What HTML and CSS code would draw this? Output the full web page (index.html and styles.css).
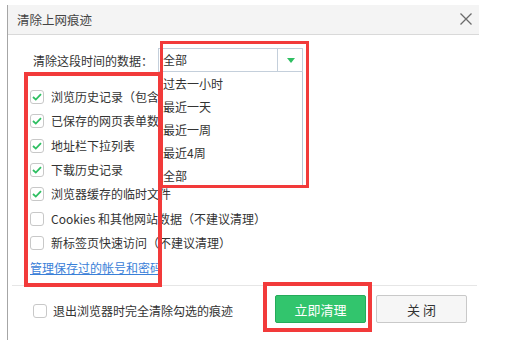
FILE: index.html
```html
<!DOCTYPE html>
<html lang="zh-CN">
<head>
<meta charset="utf-8">
<title>清除上网痕迹</title>
<link rel="stylesheet" href="styles.css">
</head>
<body>
<div class="screen">
  <div class="dialog">
    <div class="header">
      <span class="title">清除上网痕迹</span>
      <span class="close" aria-label="关闭">
        <svg width="12" height="12" viewBox="0 0 12 12"><path d="M0.5 0.5 L11.5 11.5 M11.5 0.5 L0.5 11.5" stroke="#6b6b6b" stroke-width="1.3" fill="none"/></svg>
      </span>
    </div>
    <div class="body">
      <div class="range-row">
        <span class="range-label">清除这段时间的数据：</span>
        <div class="select">
          <span class="select-value">全部</span>
          <span class="select-arrow"><svg width="8" height="5" viewBox="0 0 8 5"><path d="M0 0 H8 L4 5 Z" fill="#2fbf62"/></svg></span>
          <ul class="select-menu">
            <li>过去一小时</li>
            <li>最近一天</li>
            <li>最近一周</li>
            <li>最近4周</li>
            <li>全部</li>
          </ul>
        </div>
      </div>
      <ul class="options">
        <li class="option"><span class="checkbox checked"><svg width="10" height="8" viewBox="0 0 10 8"><path d="M1 4 L3.8 6.6 L9 1.2" stroke="#2fbf62" stroke-width="1.8" fill="none"/></svg></span><span>浏览历史记录（包含地址栏记录）</span></li>
        <li class="option"><span class="checkbox checked"><svg width="10" height="8" viewBox="0 0 10 8"><path d="M1 4 L3.8 6.6 L9 1.2" stroke="#2fbf62" stroke-width="1.8" fill="none"/></svg></span><span>已保存的网页表单数据</span></li>
        <li class="option"><span class="checkbox checked"><svg width="10" height="8" viewBox="0 0 10 8"><path d="M1 4 L3.8 6.6 L9 1.2" stroke="#2fbf62" stroke-width="1.8" fill="none"/></svg></span><span>地址栏下拉列表</span></li>
        <li class="option"><span class="checkbox checked"><svg width="10" height="8" viewBox="0 0 10 8"><path d="M1 4 L3.8 6.6 L9 1.2" stroke="#2fbf62" stroke-width="1.8" fill="none"/></svg></span><span>下载历史记录</span></li>
        <li class="option"><span class="checkbox checked"><svg width="10" height="8" viewBox="0 0 10 8"><path d="M1 4 L3.8 6.6 L9 1.2" stroke="#2fbf62" stroke-width="1.8" fill="none"/></svg></span><span>浏览器缓存的临时文件</span></li>
        <li class="option"><span class="checkbox"></span><span>Cookies 和其他网站数据（不建议清理）</span></li>
        <li class="option"><span class="checkbox"></span><span>新标签页快速访问（不建议清理）</span></li>
      </ul>
      <a class="manage-link" href="#">管理保存过的帐号和密码</a>
    </div>
    <div class="separator"></div>
    <div class="footer">
      <label class="exit-option"><span class="checkbox"></span><span>退出浏览器时完全清除勾选的痕迹</span></label>
      <div class="actions">
        <button class="btn btn-primary">立即清理</button>
        <button class="btn btn-default">关 闭</button>
      </div>
    </div>
  </div>
  <div class="mark mark-options"></div>
  <div class="mark mark-select"></div>
  <div class="mark mark-button"></div>
</div>
</body>
</html>
```

FILE: styles.css
```css
* { box-sizing: border-box; }
html, body { margin: 0; padding: 0; background: #fff; }
body {
  font-family: "Noto Sans CJK SC", "Microsoft YaHei", sans-serif;
  font-size: 12px;
  color: #333;
  text-spacing-trim: space-all;
}
ul { list-style: none; margin: 0; padding: 0; }

.screen { position: relative; width: 513px; height: 340px; overflow: hidden; }

.dialog {
  margin: 5px 0 0 7px;
  width: 472px;
  height: 335px;
  border-left: 1px solid #a6a6a6;
  background: #fff;
}

.header {
  height: 30px;
  background: #f4f4f4;
  border-bottom: 1px solid #d9d9d9;
  display: flex;
  align-items: center;
  justify-content: space-between;
  padding: 0 7px 0 9px;
}
.title { font-size: 12.5px; color: #444; line-height: 16px; padding-top: 1px; }
.close { display: flex; width: 12px; height: 12px; margin-top: -1px; }

.body { padding: 13px 0 0 22px; }

.range-row { display: flex; align-items: center; padding-left: 3px; gap: 5px; }
.range-label { line-height: 16px; padding-top: 2px; width: 120px; }
.select {
  position: relative;
  width: 145px;
  height: 24px;
  border: 1px solid #c4cfdb;
  display: flex;
}
.select-value { flex: 1; padding-left: 4px; line-height: 22px; }
.select-arrow {
  width: 25px;
  border-left: 1px solid #c4cfdb;
  display: flex;
  align-items: center;
  justify-content: center;
  padding-left: 1px;
}
.select-menu {
  position: absolute;
  z-index: 2;
  left: -1px;
  top: 23px;
  width: 145px;
  background: #fff;
  border: 1px solid #b9c7d6;
  border-top: none;
}
.select-menu li { height: 23px; line-height: 23px; padding-left: 4px; }

.options { margin-top: 13px; }
.option { height: 24.33px; display: flex; align-items: center; gap: 7px; white-space: nowrap; }
.option span:last-child { line-height: 16px; }

.checkbox {
  flex: none;
  width: 14px;
  height: 14px;
  border: 1px solid #c8c8c8;
  border-radius: 3px;
  background: #fff;
  display: flex;
  align-items: center;
  justify-content: center;
}

.manage-link {
  display: inline-block;
  margin-top: 4px;
  color: #3a80d8;
  text-decoration: underline;
  line-height: 18px;
}

.separator { height: 1px; background: #e6e6e6; margin: 8px 2px 0 4px; }

.footer {
  display: flex;
  align-items: center;
  justify-content: space-between;
  padding: 9px 12px 0 25px;
}
.exit-option { display: flex; align-items: center; gap: 6px; margin-top: 3px; }
.exit-option .checkbox { width: 14px; height: 14px; }
.actions { display: flex; gap: 10px; }
.btn {
  font-family: inherit;
  width: 91px;
  height: 28px;
  border-radius: 2px;
  font-size: 13px;
  padding: 0;
  cursor: pointer;
}
.btn-primary { background: #32c56d; border: 1px solid #25ab5a; color: #fff; }
.btn-default { background: #f6f6f6; border: 1px solid #c9c9c9; color: #333; }

.mark { position: absolute; border: 4px solid #f23a3a; z-index: 5; pointer-events: none; }
.mark-options { left: 24px; top: 72px; width: 138px; height: 215px; }
.mark-select { left: 160px; top: 41px; width: 149px; height: 147px; border-width: 3px; }
.mark-button { left: 263px; top: 282px; width: 109px; height: 50px; }
```
